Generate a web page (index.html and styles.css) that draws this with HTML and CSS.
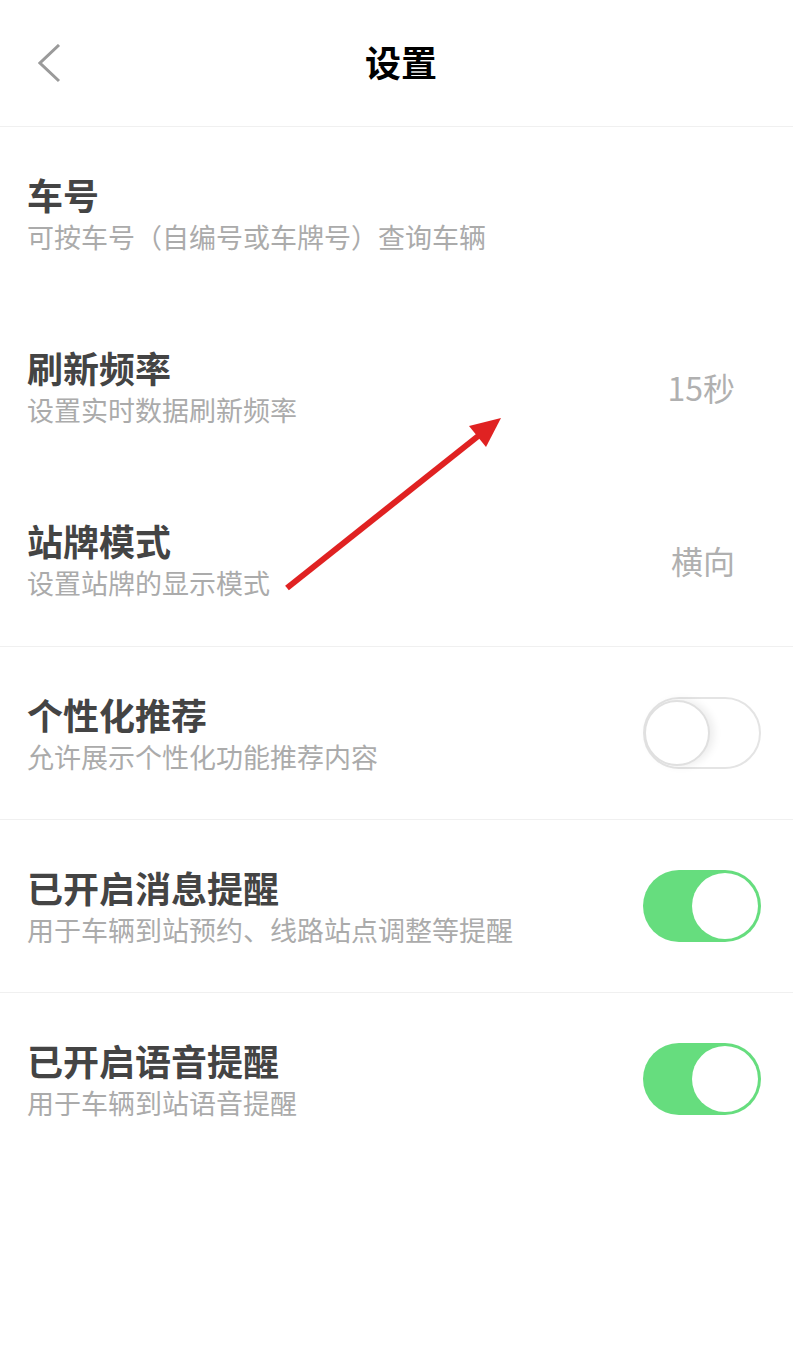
FILE: index.html
```html
<!DOCTYPE html>
<html lang="zh-CN">
<head>
<meta charset="utf-8">
<title>设置</title>
<link rel="stylesheet" href="styles.css">
</head>
<body>
<div class="page">
  <header class="header">
    <div class="back">
      <svg width="24" height="40" viewBox="0 0 24 40"><polyline points="21,1 2,19 21,37" fill="none" stroke="#9a9a9a" stroke-width="3"/></svg>
    </div>
    <h1 class="title">设置</h1>
    <div></div>
  </header>

  <section class="group">
    <div class="row big">
      <div class="text">
        <div class="name">车号</div>
        <div class="desc">可按车号（自编号或车牌号）查询车辆</div>
      </div>
    </div>
    <div class="row big">
      <div class="text">
        <div class="name">刷新频率</div>
        <div class="desc">设置实时数据刷新频率</div>
      </div>
      <div class="value">15秒</div>
    </div>
    <div class="row big">
      <div class="text">
        <div class="name">站牌模式</div>
        <div class="desc">设置站牌的显示模式</div>
      </div>
      <div class="value">横向</div>
    </div>
  </section>

  <section class="group">
    <div class="row">
      <div class="text">
        <div class="name">个性化推荐</div>
        <div class="desc">允许展示个性化功能推荐内容</div>
      </div>
      <div class="switch off"><span class="knob"></span></div>
    </div>
  </section>

  <section class="group">
    <div class="row">
      <div class="text">
        <div class="name">已开启消息提醒</div>
        <div class="desc">用于车辆到站预约、线路站点调整等提醒</div>
      </div>
      <div class="switch on"><span class="knob"></span></div>
    </div>
  </section>

  <section class="group last">
    <div class="row">
      <div class="text">
        <div class="name">已开启语音提醒</div>
        <div class="desc">用于车辆到站语音提醒</div>
      </div>
      <div class="switch on"><span class="knob"></span></div>
    </div>
  </section>

  <svg class="annot" width="793" height="1372" viewBox="0 0 793 1372">
    <line x1="287" y1="588" x2="482" y2="433" stroke="#e02222" stroke-width="6"/>
    <polygon points="501,418 469,426 486,447" fill="#e02222"/>
  </svg>
</div>
</body>
</html>
```

FILE: styles.css
```css
html, body {
  margin: 0;
  padding: 0;
  background: #ffffff;
}

body {
  font-family: "Noto Sans CJK SC", "Noto Sans", sans-serif;
}

.page {
  position: relative;
  width: 793px;
  min-height: 1372px;
}

.header {
  height: 126px;
  display: grid;
  grid-template-columns: 1fr auto 1fr;
  align-items: center;
  border-bottom: 1px solid #f0f0f0;
}

.back {
  padding-left: 38px;
  padding-top: 1px;
  display: flex;
  align-items: center;
}

.back svg {
  display: block;
}

.title {
  margin: 0 0 0 9px;
  font-size: 36px;
  font-weight: 700;
  color: #000;
  line-height: 44px;
  padding-bottom: 4px;
}

.group {
  border-bottom: 1px solid #f0f0f0;
}

.group.last {
  border-bottom: none;
}

.row {
  height: 172px;
  display: flex;
  align-items: center;
  justify-content: space-between;
  padding: 0 32px 0 27px;
  box-sizing: border-box;
}

.row.big {
  height: 173px;
}

.text {
  display: flex;
  flex-direction: column;
}

.name {
  font-size: 36px;
  line-height: 44px;
  font-weight: 700;
  color: #444444;
}

.desc {
  font-size: 27px;
  line-height: 36px;
  margin-top: 3px;
  color: #ababab;
}

.value {
  font-size: 32px;
  line-height: 40px;
  color: #b0b0b0;
  margin-right: 26px;
}

.switch {
  width: 118px;
  height: 72px;
  border-radius: 36px;
  box-sizing: border-box;
  display: flex;
  align-items: center;
}

.switch.on {
  background: #66dd7e;
  justify-content: flex-end;
  padding: 3px;
}

.switch.on .knob {
  width: 66px;
  height: 66px;
  border-radius: 50%;
  background: #fff;
}

.switch.off {
  background: #fff;
  border: 2px solid #e4e4e4;
  justify-content: flex-start;
  padding: 0;
}

.switch.off .knob {
  width: 66px;
  height: 66px;
  margin-left: -1px;
  border-radius: 50%;
  background: #fff;
  border: 2px solid #e0e0e0;
  box-sizing: border-box;
  box-shadow: 4px 0 8px rgba(0, 0, 0, 0.08);
}

.annot {
  position: absolute;
  left: 0;
  top: 0;
  pointer-events: none;
}
```
